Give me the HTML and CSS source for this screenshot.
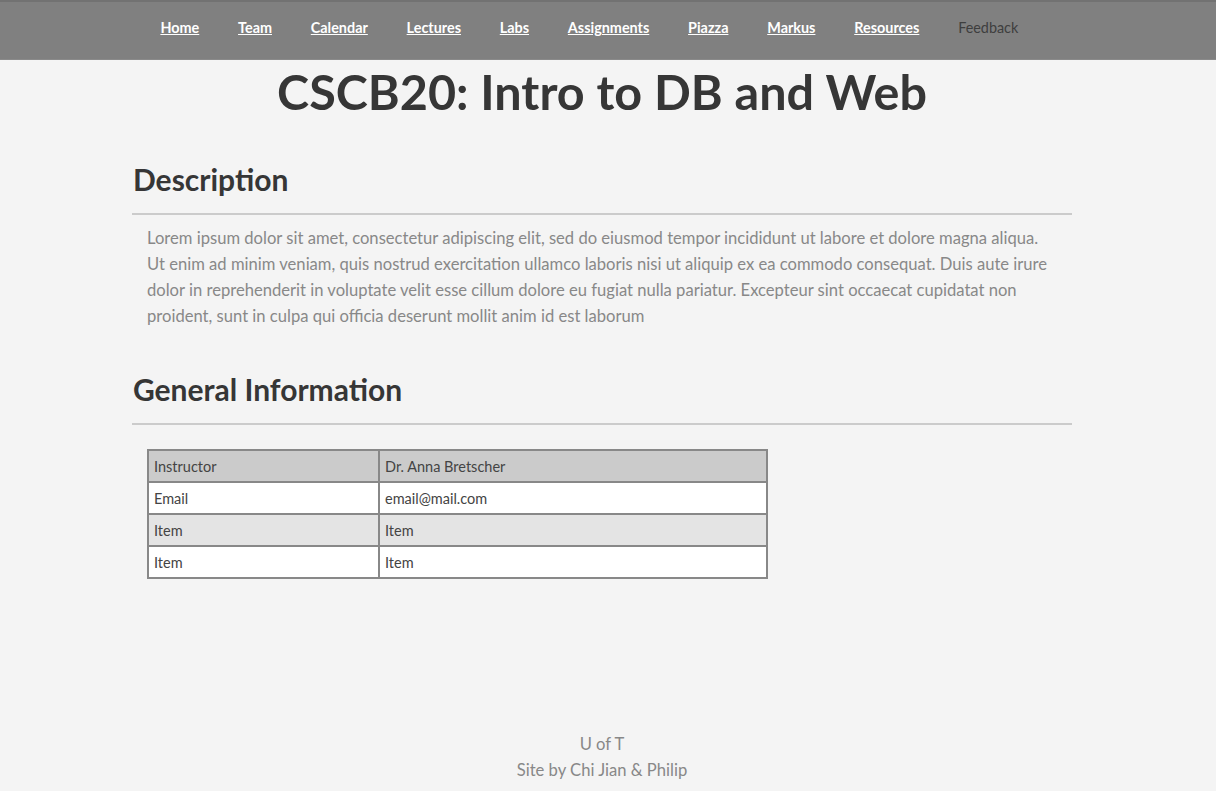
FILE: index.html
```html
<!DOCTYPE html>
<html lang="en">
<head>
<meta charset="utf-8">
<title>CSCB20: Intro to DB and Web</title>
<link rel="stylesheet" href="styles.css">
</head>
<body>
<nav class="topnav">
  <ul class="nav-list">
    <li><a href="#">Home</a></li>
    <li><a href="#">Team</a></li>
    <li><a href="#">Calendar</a></li>
    <li><a href="#">Lectures</a></li>
    <li><a href="#">Labs</a></li>
    <li><a href="#">Assignments</a></li>
    <li><a href="#">Piazza</a></li>
    <li><a href="#">Markus</a></li>
    <li><a href="#">Resources</a></li>
    <li><span class="nav-current">Feedback</span></li>
  </ul>
</nav>
<main class="container">
  <h1 class="title">CSCB20: Intro to DB and Web</h1>
  <section class="section">
    <h2 class="section-title">Description</h2>
    <p class="section-text">Lorem ipsum dolor sit amet, consectetur adipiscing elit, sed do eiusmod tempor incididunt ut labore et dolore magna aliqua. Ut enim ad minim veniam, quis nostrud exercitation ullamco laboris nisi ut aliquip ex ea commodo consequat. Duis aute irure dolor in reprehenderit in voluptate velit esse cillum dolore eu fugiat nulla pariatur. Excepteur sint occaecat cupidatat non proident, sunt in culpa qui officia deserunt mollit anim id est laborum</p>
  </section>
  <section class="section">
    <h2 class="section-title">General Information</h2>
    <table class="info-table">
      <tr class="row-head"><td class="col-key">Instructor</td><td>Dr. Anna Bretscher</td></tr>
      <tr class="row-white"><td class="col-key">Email</td><td>email@mail.com</td></tr>
      <tr class="row-grey"><td class="col-key">Item</td><td>Item</td></tr>
      <tr class="row-white"><td class="col-key">Item</td><td>Item</td></tr>
    </table>
  </section>
</main>
<footer class="footer">
  <p class="footer-line">U of T</p>
  <p class="footer-line">Site by Chi Jian &amp; Philip</p>
</footer>
</body>
</html>
```
FILE: styles.css
```css
html, body {
  margin: 0;
  padding: 0;
}
body {
  background: #f4f4f4;
  font-family: Lato, "Open Sans", sans-serif;
  color: #333;
  min-height: 791px;
  display: flex;
  flex-direction: column;
}
.topnav {
  background: #808080;
  border-top: 2px solid #727272;
  border-bottom: 1px solid #8a8a8a;
  height: 57px;
}
.nav-list {
  list-style: none;
  margin: 0;
  padding: 0 0 6px 141px;
  box-sizing: border-box;
  display: flex;
  align-items: center;
  height: 100%;
}
.nav-list li {
  padding: 0 19.4px;
  font-size: 14.4px;
}
.nav-list a {
  color: #fff;
  font-weight: bold;
  text-decoration: underline;
}
.nav-current {
  color: #3e3e3e;
}
.container {
  width: 940px;
  margin-left: 132px;
}
.title {
  margin: 1px 0 0;
  text-align: center;
  font-size: 48.5px;
  line-height: 60px;
  font-weight: bold;
  color: #363636;
}
.section {
  margin-top: 38px;
}
.section + .section {
  margin-top: 40px;
}
.section-title {
  margin: 0;
  padding: 0 0 14px 1px;
  font-size: 30px;
  line-height: 40px;
  font-weight: bold;
  color: #363636;
  border-bottom: 2px solid #cbcbcb;
}
.section-text {
  margin: 10px 15px 0;
  font-size: 16.6px;
  line-height: 26px;
  color: #888;
}
.info-table {
  margin: 24px 0 0 15px;
  border-collapse: collapse;
  width: 621px;
  font-size: 14.5px;
  color: #444;
}
.info-table td {
  border: 2px solid #888;
  height: 30px;
  padding: 0 5px;
}
.col-key {
  width: 219px;
}
.row-head td { background: #cbcbcb; }
.row-grey td { background: #e4e4e4; }
.row-white td { background: #fff; }
.footer {
  margin-top: auto;
  margin-left: 132px;
  width: 940px;
  padding-bottom: 8px;
  text-align: center;
}
.footer-line {
  margin: 0;
  font-size: 16.6px;
  line-height: 26px;
  color: #888;
}
```
